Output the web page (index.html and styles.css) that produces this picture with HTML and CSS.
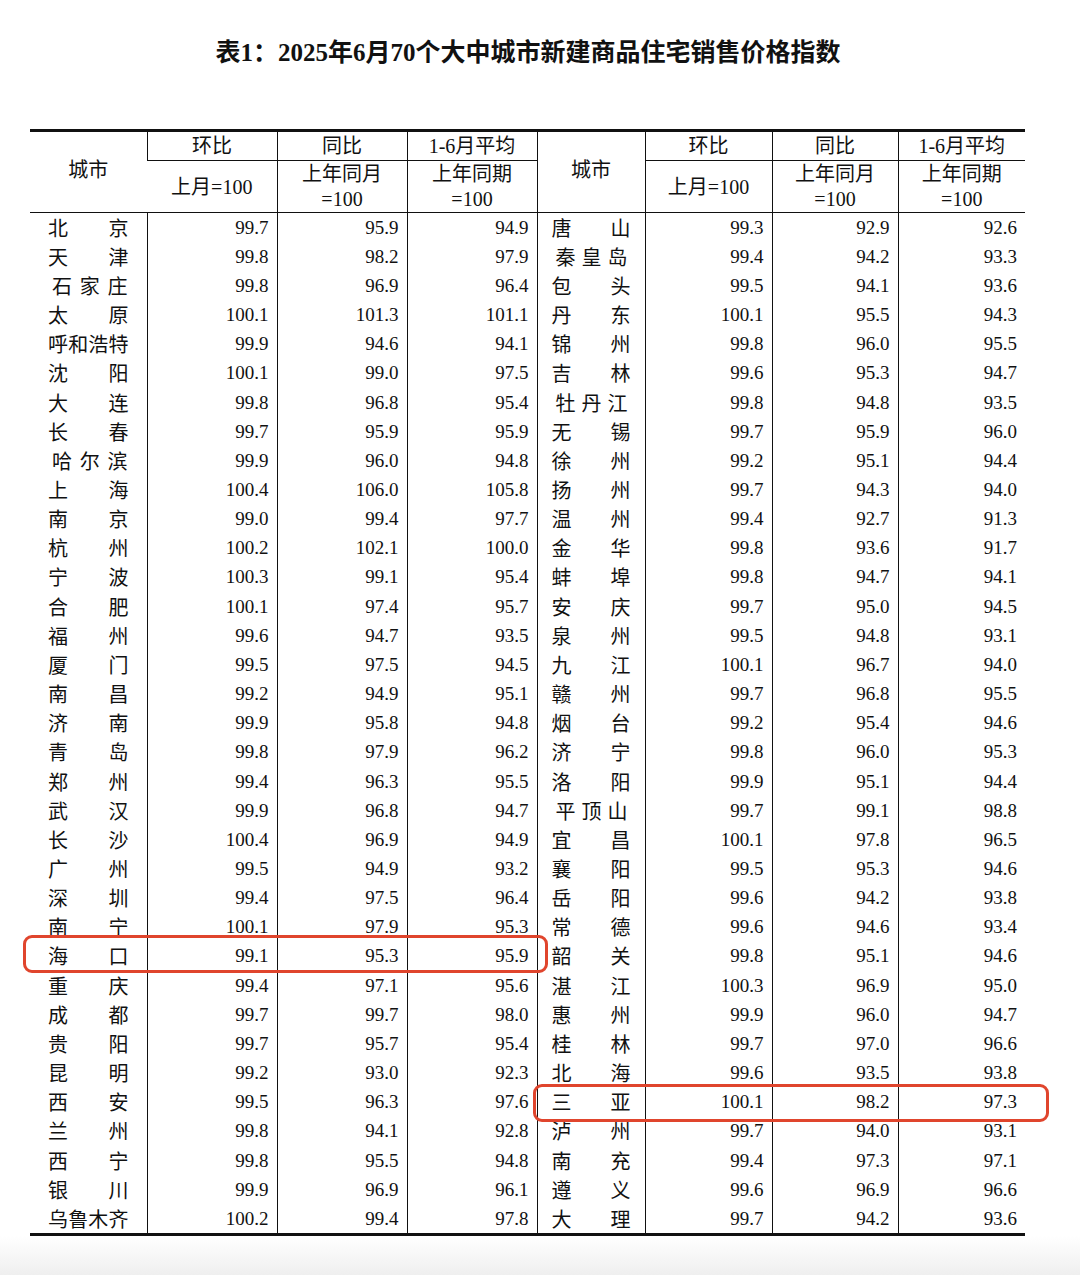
FILE: index.html
```html
<!DOCTYPE html>
<html lang="zh">
<head>
<meta charset="utf-8">
<title>表1</title>
<link rel="stylesheet" href="styles.css">
</head>
<body>
<h1 class="title">表1：2025年6月70个大中城市新建商品住宅销售价格指数</h1>
<div class="wrap">
<table class="tbl">
<colgroup>
<col class="c-city-l"><col class="c-n"><col class="c-n"><col class="c-n">
<col class="c-city-r"><col class="c-n2"><col class="c-n3"><col class="c-n2">
</colgroup>
<thead>
<tr class="h1">
<th rowspan="2" class="hc">城市</th><th>环比</th><th>同比</th><th>1-6月平均</th>
<th rowspan="2" class="hc">城市</th><th>环比</th><th>同比</th><th>1-6月平均</th>
</tr>
<tr class="h2">
<th>上月=100</th><th>上年同月<br>=100</th><th>上年同期<br>=100</th>
<th>上月=100</th><th>上年同月<br>=100</th><th>上年同期<br>=100</th>
</tr>
</thead>
<tbody>
<tr><td class="cl">北京</td><td>99.7</td><td>95.9</td><td>94.9</td><td class="cr">唐山</td><td>99.3</td><td>92.9</td><td>92.6</td></tr>
<tr><td class="cl">天津</td><td>99.8</td><td>98.2</td><td>97.9</td><td class="cr c3">秦皇岛</td><td>99.4</td><td>94.2</td><td>93.3</td></tr>
<tr><td class="cl c3">石家庄</td><td>99.8</td><td>96.9</td><td>96.4</td><td class="cr">包头</td><td>99.5</td><td>94.1</td><td>93.6</td></tr>
<tr><td class="cl">太原</td><td>100.1</td><td>101.3</td><td>101.1</td><td class="cr">丹东</td><td>100.1</td><td>95.5</td><td>94.3</td></tr>
<tr><td class="cl">呼和浩特</td><td>99.9</td><td>94.6</td><td>94.1</td><td class="cr">锦州</td><td>99.8</td><td>96.0</td><td>95.5</td></tr>
<tr><td class="cl">沈阳</td><td>100.1</td><td>99.0</td><td>97.5</td><td class="cr">吉林</td><td>99.6</td><td>95.3</td><td>94.7</td></tr>
<tr><td class="cl">大连</td><td>99.8</td><td>96.8</td><td>95.4</td><td class="cr c3">牡丹江</td><td>99.8</td><td>94.8</td><td>93.5</td></tr>
<tr><td class="cl">长春</td><td>99.7</td><td>95.9</td><td>95.9</td><td class="cr">无锡</td><td>99.7</td><td>95.9</td><td>96.0</td></tr>
<tr><td class="cl c3">哈尔滨</td><td>99.9</td><td>96.0</td><td>94.8</td><td class="cr">徐州</td><td>99.2</td><td>95.1</td><td>94.4</td></tr>
<tr><td class="cl">上海</td><td>100.4</td><td>106.0</td><td>105.8</td><td class="cr">扬州</td><td>99.7</td><td>94.3</td><td>94.0</td></tr>
<tr><td class="cl">南京</td><td>99.0</td><td>99.4</td><td>97.7</td><td class="cr">温州</td><td>99.4</td><td>92.7</td><td>91.3</td></tr>
<tr><td class="cl">杭州</td><td>100.2</td><td>102.1</td><td>100.0</td><td class="cr">金华</td><td>99.8</td><td>93.6</td><td>91.7</td></tr>
<tr><td class="cl">宁波</td><td>100.3</td><td>99.1</td><td>95.4</td><td class="cr">蚌埠</td><td>99.8</td><td>94.7</td><td>94.1</td></tr>
<tr><td class="cl">合肥</td><td>100.1</td><td>97.4</td><td>95.7</td><td class="cr">安庆</td><td>99.7</td><td>95.0</td><td>94.5</td></tr>
<tr><td class="cl">福州</td><td>99.6</td><td>94.7</td><td>93.5</td><td class="cr">泉州</td><td>99.5</td><td>94.8</td><td>93.1</td></tr>
<tr><td class="cl">厦门</td><td>99.5</td><td>97.5</td><td>94.5</td><td class="cr">九江</td><td>100.1</td><td>96.7</td><td>94.0</td></tr>
<tr><td class="cl">南昌</td><td>99.2</td><td>94.9</td><td>95.1</td><td class="cr">赣州</td><td>99.7</td><td>96.8</td><td>95.5</td></tr>
<tr><td class="cl">济南</td><td>99.9</td><td>95.8</td><td>94.8</td><td class="cr">烟台</td><td>99.2</td><td>95.4</td><td>94.6</td></tr>
<tr><td class="cl">青岛</td><td>99.8</td><td>97.9</td><td>96.2</td><td class="cr">济宁</td><td>99.8</td><td>96.0</td><td>95.3</td></tr>
<tr><td class="cl">郑州</td><td>99.4</td><td>96.3</td><td>95.5</td><td class="cr">洛阳</td><td>99.9</td><td>95.1</td><td>94.4</td></tr>
<tr><td class="cl">武汉</td><td>99.9</td><td>96.8</td><td>94.7</td><td class="cr c3">平顶山</td><td>99.7</td><td>99.1</td><td>98.8</td></tr>
<tr><td class="cl">长沙</td><td>100.4</td><td>96.9</td><td>94.9</td><td class="cr">宜昌</td><td>100.1</td><td>97.8</td><td>96.5</td></tr>
<tr><td class="cl">广州</td><td>99.5</td><td>94.9</td><td>93.2</td><td class="cr">襄阳</td><td>99.5</td><td>95.3</td><td>94.6</td></tr>
<tr><td class="cl">深圳</td><td>99.4</td><td>97.5</td><td>96.4</td><td class="cr">岳阳</td><td>99.6</td><td>94.2</td><td>93.8</td></tr>
<tr><td class="cl">南宁</td><td>100.1</td><td>97.9</td><td>95.3</td><td class="cr">常德</td><td>99.6</td><td>94.6</td><td>93.4</td></tr>
<tr><td class="cl">海口</td><td>99.1</td><td>95.3</td><td>95.9</td><td class="cr">韶关</td><td>99.8</td><td>95.1</td><td>94.6</td></tr>
<tr><td class="cl">重庆</td><td>99.4</td><td>97.1</td><td>95.6</td><td class="cr">湛江</td><td>100.3</td><td>96.9</td><td>95.0</td></tr>
<tr><td class="cl">成都</td><td>99.7</td><td>99.7</td><td>98.0</td><td class="cr">惠州</td><td>99.9</td><td>96.0</td><td>94.7</td></tr>
<tr><td class="cl">贵阳</td><td>99.7</td><td>95.7</td><td>95.4</td><td class="cr">桂林</td><td>99.7</td><td>97.0</td><td>96.6</td></tr>
<tr><td class="cl">昆明</td><td>99.2</td><td>93.0</td><td>92.3</td><td class="cr">北海</td><td>99.6</td><td>93.5</td><td>93.8</td></tr>
<tr><td class="cl">西安</td><td>99.5</td><td>96.3</td><td>97.6</td><td class="cr">三亚</td><td>100.1</td><td>98.2</td><td>97.3</td></tr>
<tr><td class="cl">兰州</td><td>99.8</td><td>94.1</td><td>92.8</td><td class="cr">泸州</td><td>99.7</td><td>94.0</td><td>93.1</td></tr>
<tr><td class="cl">西宁</td><td>99.8</td><td>95.5</td><td>94.8</td><td class="cr">南充</td><td>99.4</td><td>97.3</td><td>97.1</td></tr>
<tr><td class="cl">银川</td><td>99.9</td><td>96.9</td><td>96.1</td><td class="cr">遵义</td><td>99.6</td><td>96.9</td><td>96.6</td></tr>
<tr><td class="cl">乌鲁木齐</td><td>100.2</td><td>99.4</td><td>97.8</td><td class="cr">大理</td><td>99.7</td><td>94.2</td><td>93.6</td></tr>
</tbody>
</table>
<div class="mark mark-haikou"></div>
<div class="mark mark-sanya"></div>
</div>
</body>
</html>
```
FILE: styles.css
```css
html {
  background: linear-gradient(to bottom, #ffffff 0, #ffffff 1236px, #efefef 1275px);
  min-height: 1275px;
}
body {
  margin: 0;
  color: #111;
  font-family: "Liberation Serif", "Noto Sans CJK SC", serif;
}
.title {
  margin: 38px 0 0;
  padding-right: 24px;
  height: 30px;
  line-height: 30px;
  text-align: center;
  font-size: 25px;
  font-weight: 700;
  font-family: "Liberation Serif", "Noto Sans CJK SC", serif;
}
.wrap {
  position: relative;
  margin-top: 61px;
  width: 1080px;
}
.tbl {
  margin-left: 30px;
  width: 995px;
  table-layout: fixed;
  border-collapse: collapse;
  border-top: 3px solid #111;
  border-bottom: 3px solid #111;
}
.c-city-l { width: 117px; }
.c-n { width: 130px; }
.c-city-r { width: 108px; }
.c-n2 { width: 127px; }
.c-n3 { width: 126px; }
.tbl th {
  font-weight: 400;
  font-size: 20px;
  line-height: 25px;
  padding: 0;
  border-left: 1px solid #111;
  border-bottom: 1px solid #111;
  text-align: center;
  vertical-align: middle;
}
.tbl th:first-child { border-left: none; }
.h1 { height: 30px; }
.h2 { height: 52px; }
.h2 th { padding-top: 1px; }
.hc { padding-bottom: 3px !important; }
.tbl td {
  height: 29.17px;
  padding: 0 8px 0 0;
  border-left: 1px solid #111;
  text-align: right;
  font-size: 19px;
  line-height: 22px;
  vertical-align: middle;
  font-family: "Liberation Serif", serif;
  white-space: nowrap;
}
.tbl td:first-child { border-left: none; }
.tbl td.cl,
.tbl td.cr {
  font-family: "Noto Sans CJK SC", sans-serif;
  font-size: 20px;
  text-align: justify;
  text-align-last: justify;
  line-height: 24px;
}
.tbl td.cl { padding: 0 18px 0 18px; }
.tbl td.cr { padding: 0 14px 0 14px; }
.tbl td.cl.c3 { padding: 0 19px 0 22px; }
.tbl td.cr.c3 { padding: 0 17px 0 18px; }
.mark {
  position: absolute;
  border: 3px solid #e0452d;
  border-radius: 9px;
  box-sizing: border-box;
}
.mark-haikou {
  left: 23px;
  top: 806px;
  width: 525px;
  height: 38px;
}
.mark-sanya {
  left: 533px;
  top: 955px;
  width: 516px;
  height: 38px;
}
```
